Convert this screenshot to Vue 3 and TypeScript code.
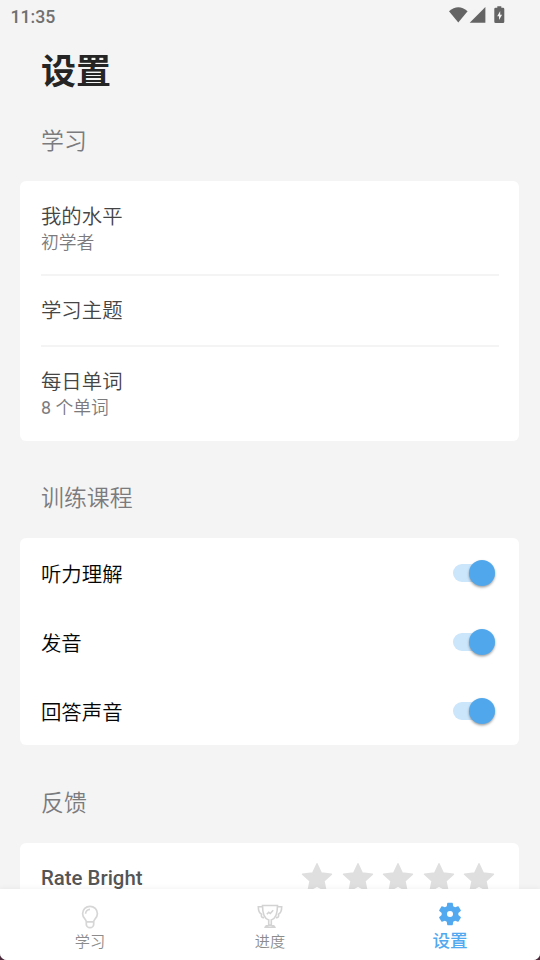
<script setup lang="ts">
interface Item { title: string; count?: number; sub?: string }

const study: Item[] = [
  { title: '我的水平', sub: '初学者' },
  { title: '学习主题' },
  { title: '每日单词', count: 8, sub: '个单词' },
]
const toggles: string[] = ['听力理解', '发音', '回答声音']
</script>

<template>
  <div class="screen">
    <header class="status">
      <span class="clock">11:35</span>
      <svg class="sys" width="60" height="20" viewBox="0 0 60 20" fill="#646464">
        <path d="M-1 4.200Q8.300-3.600 17.600 4.200L8.300 15.600Z" />
        <path d="M19.700 15.700 35.400 0v15.700z" />
        <path fill-rule="evenodd" d="M47.300-.8h4V.800h1.700q1.300 0 1.300 1.300v12.600q0 1.300-1.300 1.300h-7.400q-1.300 0-1.300-1.300V2.100q0-1.300 1.300-1.300h1.700zM50.200 4l-3 5.200h1.800V13l3.100-5.300h-1.900z" />
      </svg>
    </header>

    <h1 class="title">设置</h1>

    <h2 class="section first">学习</h2>
    <section class="card study">
      <div v-for="item in study" :key="item.title" class="item" :class="{ single: !item.sub }">
        <div class="label">{{ item.title }}</div>
        <div v-if="item.sub" class="sub"><span v-if="item.count" class="count">{{ item.count + ' ' }}</span>{{ item.sub }}</div>
      </div>
    </section>

    <h2 class="section second">训练课程</h2>
    <section class="card">
      <div v-for="name in toggles" :key="name" class="toggle">
        <span>{{ name }}</span>
        <span class="switch"><span class="thumb"></span></span>
      </div>
    </section>

    <h2 class="section third">反馈</h2>
    <section class="card rate">
      <span class="rate-label">Rate Bright</span>
      <div class="stars">
        <svg v-for="n in 5" :key="n" width="32" height="32" viewBox="0 0 32 32">
          <path d="M16 1.700 20.300 11 30.500 12.200 23 19.100 25 29.200 16 24.200 7 29.200 9 19.100 1.500 12.200 11.700 11Z" fill="#dfdfdf" stroke="#dfdfdf" stroke-width="1.400" stroke-linejoin="round" />
        </svg>
      </div>
    </section>

    <nav class="nav">
      <div class="tab">
        <svg width="28" height="28" viewBox="0 0 28 28" fill="none" stroke="#d6d6d6" stroke-width="1.700">
          <path d="M10.300 18.800c0-2.600-3.700-3.800-3.700-8.100a7.400 7.400 0 0 1 14.800 0c0 4.300-3.700 5.500-3.700 8.100zM10.300 18.800v2.500a3.700 3.400 0 0 0 7.400 0v-2.500M9.600 10.700a4.500 4.500 0 0 1 4.400-4.400" />
        </svg>
        <span>学习</span>
      </div>
      <div class="tab">
        <svg width="28" height="28" viewBox="0 0 28 28" fill="none" stroke="#d3d3d3" stroke-width="1.600">
          <path d="M6.500 2.500h15c0 8-1.800 13.200-6.200 14.400v5.200h-2.600v-5.200C8.300 15.700 6.500 10.500 6.500 2.500zM6.800 3.800H2.300c0 4 1.100 6.500 3.300 7.500-.9 2.500.5 3.500 2.500 3.300M21.200 3.800h4.500c0 4-1.100 6.500-3.300 7.500.9 2.500-.5 3.500-2.500 3.300M9.200 24.200c.6-1.700 2.100-2.100 4.800-2.100s4.200.4 4.800 2.100zM10.800 11.300l2-2 1.500 1.200 2.900-3.200" />
        </svg>
        <span>进度</span>
      </div>
      <div class="tab active">
        <svg width="28" height="28" viewBox="0 0 24 24" fill="#53a9ef">
          <path d="M19.140 12.940c.04-.3.060-.61.060-.94s-.02-.64-.07-.94l2.030-1.580c.18-.14.230-.41.120-.61l-1.920-3.320c-.12-.22-.37-.29-.59-.22l-2.390.96c-.5-.38-1.030-.7-1.620-.94l-.36-2.540c-.04-.24-.24-.41-.48-.41h-3.840c-.24 0-.43.170-.47.410l-.36 2.540c-.59.240-1.130.57-1.620.94l-2.390-.96c-.22-.08-.47 0-.59.220L2.740 8.870c-.12.210-.08.470.12.610l2.030 1.580c-.05.3-.09.630-.09.940s.02.640.07.940l-2.030 1.580c-.18.140-.23.410-.12.610l1.920 3.320c.12.220.37.290.59.220l2.390-.96c.5.380 1.030.7 1.620.94l.36 2.540c.05.240.24.410.48.410h3.840c.24 0 .44-.17.470-.41l.36-2.540c.59-.24 1.130-.56 1.620-.94l2.390.96c.22.080.47 0 .59-.22l1.920-3.320c.12-.22.070-.47-.12-.61zM12 14.600a2.600 2.600 0 1 1 0-5.200 2.600 2.600 0 0 1 0 5.200" />
        </svg>
        <span>设置</span>
      </div>
    </nav>
  </div>
</template>

<style>
body {
  background: #4c2c3c;
}
</style>

<style scoped>
.screen {
  position: relative;
  box-sizing: border-box;
  width: 540px;
  height: 960px;
  overflow: hidden;
  background: #f4f4f4;
  border-radius: 0 0 7px 7px;
  font-family: Roboto, 'Noto Sans CJK SC', sans-serif;
}
.status {
  display: flex;
  justify-content: space-between;
  height: 40px;
  padding: 7px 30px 0 10.500px;
  box-sizing: border-box;
}
.clock {
  font-size: 17.700px;
  line-height: 20px;
  font-weight: 500;
  color: #707070;
}
.sys {
  overflow: visible;
}
.title {
  margin: 8px 0 0 41px;
  font-size: 35px;
  line-height: 50px;
  font-weight: 700;
  color: #252525;
}
.section {
  margin: 0 0 0 41px;
  height: 34px;
  font-size: 22.900px;
  line-height: 34px;
  font-weight: 350;
  color: #7b7b7e;
}
.first { margin-top: 27px; margin-bottom: 22px; }
.second { margin-top: 41px; margin-bottom: 22px; }
.third { margin-top: 41.500px; margin-bottom: 22.500px; }
.card {
  box-sizing: border-box;
  margin: 0 20.600px 0 20.400px;
  padding: 0 20.400px 0 20.600px;
  background: #fff;
  border-radius: 6px;
}
.study {
  height: 260px;
}
.item {
  box-sizing: border-box;
  height: 93px;
  padding-top: 20.500px;
}
.item + .item {
  border-top: 2px solid #f4f4f4;
  padding-top: 20px;
}
.item.single {
  height: 71px;
}
.label {
  font-size: 20.400px;
  line-height: 30px;
  font-weight: 350;
  color: #454545;
}
.sub {
  font-size: 17.800px;
  line-height: 22px;
  font-weight: 350;
  color: #7b7b7e;
}
.count {
  font-weight: 400;
  white-space: pre;
}
.toggle {
  display: flex;
  align-items: center;
  justify-content: space-between;
  height: 69px;
  padding-right: 4.500px;
  font-size: 20.400px;
  color: #050505;
  font-weight: 350;
}
.switch {
  display: flex;
  align-items: center;
  justify-content: flex-end;
  width: 42px;
  height: 18px;
  border-radius: 9px;
  background: #cbe5fa;
}
.thumb {
  flex: none;
  width: 26px;
  height: 26px;
  border-radius: 50%;
  background: #51a7eb;
  box-shadow: 0 1.500px 2.500px rgba(0, 0, 0, 0.36);
}
.rate {
  display: flex;
  align-items: center;
  justify-content: space-between;
  height: 70px;
  padding-right: 24.400px;
}
.rate-label {
  font-size: 20.400px;
  font-weight: 500;
  color: #555;
}
.stars {
  display: flex;
  gap: 8.500px;
}
.nav {
  position: absolute;
  left: 0;
  right: 0;
  bottom: 0;
  height: 71.500px;
  display: grid;
  grid-template-columns: repeat(3, 1fr);
  background: #fff;
  box-shadow: 0 -1px 5px rgba(0, 0, 0, 0.05);
}
.tab {
  display: flex;
  flex-direction: column;
  align-items: center;
  padding-top: 14.500px;
  font-size: 15.200px;
  line-height: 22px;
  font-weight: 350;
  color: #8c8c8c;
}
.active {
  padding-top: 11.500px;
  font-size: 17.600px;
  line-height: 26px;
  font-weight: 500;
  color: #53a9ef;
}
</style>
